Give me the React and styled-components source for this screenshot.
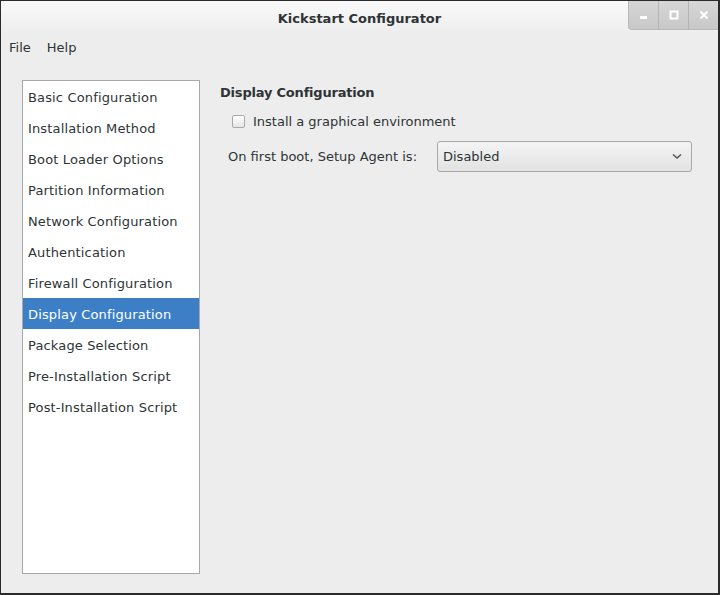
import React, { useState } from 'react';
import styled, { createGlobalStyle } from 'styled-components';

const GlobalStyle = createGlobalStyle`
  html, body {
    margin: 0;
    padding: 0;
    background: #ededed;
  }
  body {
    font-family: "DejaVu Sans", "Noto Sans", sans-serif;
    font-size: 13px;
    color: #2e3436;
  }
`;

const Window = styled.div`
  width: 720px;
  height: 595px;
  box-sizing: border-box;
  border: 1px solid #2b2b2b;
  border-width: 1px 2px 2px 1px;
  background: #ededed;
  display: flex;
  flex-direction: column;
  overflow: hidden;
`;

const TitleBar = styled.div`
  position: relative;
  height: 33px;
  flex-shrink: 0;
  display: flex;
  align-items: center;
  justify-content: center;
  background: linear-gradient(#fafafa, #ededed);
`;

const Title = styled.div`
  font-weight: bold;
  font-size: 13px;
  color: #2e3436;
  margin-top: 1px;
`;

const WindowButtons = styled.div`
  position: absolute;
  top: 0;
  right: 0;
  display: flex;
  height: 28px;
  background: linear-gradient(#d6d6d6, #c8c8c8);
  border: 1px solid #b8b8b8;
  border-top: none;
  border-right: none;
  border-bottom-left-radius: 4px;
`;

const WinButton = styled.div`
  width: 29px;
  display: flex;
  align-items: center;
  justify-content: center;
  border-left: ${p => (p.$first ? 'none' : '1px solid #b4b4b4')};
`;

const MenuBar = styled.div`
  display: flex;
  gap: 16px;
  padding: 1px 8px 0;
  height: 24px;
  align-items: center;
  flex-shrink: 0;
`;

const MenuItem = styled.span`
  font-size: 13px;
  color: #2e3436;
`;

const Body = styled.div`
  flex: 1;
  display: flex;
  padding: 21px 26px 19px 21px;
  gap: 20px;
  min-height: 0;
`;

const SideList = styled.div`
  width: 176px;
  background: #fff;
  border: 1px solid #a8a8a8;
  display: flex;
  flex-direction: column;
  flex-shrink: 0;
`;

const SideItem = styled.div`
  height: 31px;
  box-sizing: border-box;
  padding: 2px 0 0 5px;
  display: flex;
  align-items: center;
  white-space: nowrap;
  letter-spacing: 0.15px;
  background: ${p => (p.$active ? '#3d7fc7' : 'transparent')};
  color: ${p => (p.$active ? '#ffffff' : '#2e3436')};
  cursor: default;
`;

const Panel = styled.div`
  flex: 1;
  display: flex;
  flex-direction: column;
  padding-top: 4px;
`;

const Heading = styled.div`
  font-weight: bold;
  height: 18px;
  line-height: 18px;
  letter-spacing: -0.2px;
`;

const CheckRow = styled.label`
  display: flex;
  align-items: center;
  gap: 8px;
  margin: 10px 0 0 12px;
  height: 18px;
`;

const Box = styled.span`
  width: 11px;
  height: 11px;
  border: 1px solid #a9a9a9;
  border-radius: 2px;
  background: linear-gradient(#ffffff, #e6e6e6);
`;

const FieldRow = styled.div`
  display: flex;
  align-items: center;
  margin: 11px 0 0 8px;
`;

const FieldLabel = styled.span`
  width: 209px;
`;

const Select = styled.div`
  flex: 1;
  height: 31px;
  box-sizing: border-box;
  border: 1px solid #a8a8a8;
  border-radius: 3px;
  background: linear-gradient(#f4f4f4, #e2e2e2);
  display: flex;
  align-items: center;
  justify-content: space-between;
  padding: 0 9px 0 5px;
`;

const sections = [
  'Basic Configuration',
  'Installation Method',
  'Boot Loader Options',
  'Partition Information',
  'Network Configuration',
  'Authentication',
  'Firewall Configuration',
  'Display Configuration',
  'Package Selection',
  'Pre-Installation Script',
  'Post-Installation Script',
];

export default function App() {
  const [active, setActive] = useState('Display Configuration');

  return (
    <>
      <GlobalStyle />
      <Window>
        <TitleBar>
          <Title>Kickstart Configurator</Title>
          <WindowButtons>
            <WinButton $first>
              <svg width="10" height="10" viewBox="0 0 10 10">
                <rect x="1" y="6" width="7" height="3" fill="#fff" />
              </svg>
            </WinButton>
            <WinButton>
              <svg width="10" height="10" viewBox="0 0 10 10">
                <rect x="1.5" y="1.5" width="7" height="7" fill="none" stroke="#fff" strokeWidth="2" />
              </svg>
            </WinButton>
            <WinButton>
              <svg width="10" height="10" viewBox="0 0 10 10">
                <path d="M1.5 1.5 L8.5 8.5 M8.5 1.5 L1.5 8.5" stroke="#fff" strokeWidth="2.2" />
              </svg>
            </WinButton>
          </WindowButtons>
        </TitleBar>
        <MenuBar>
          <MenuItem>File</MenuItem>
          <MenuItem>Help</MenuItem>
        </MenuBar>
        <Body>
          <SideList>
            {sections.map(s => (
              <SideItem key={s} $active={s === active} onClick={() => setActive(s)}>
                {s}
              </SideItem>
            ))}
          </SideList>
          <Panel>
            <Heading>Display Configuration</Heading>
            <CheckRow>
              <Box />
              <span>Install a graphical environment</span>
            </CheckRow>
            <FieldRow>
              <FieldLabel>On first boot, Setup Agent is:</FieldLabel>
              <Select>
                <span>Disabled</span>
                <svg width="10" height="7" viewBox="0 0 10 7">
                  <path d="M1 1.5 L5 5 L9 1.5" fill="none" stroke="#555" strokeWidth="1.6" />
                </svg>
              </Select>
            </FieldRow>
          </Panel>
        </Body>
      </Window>
    </>
  );
}
